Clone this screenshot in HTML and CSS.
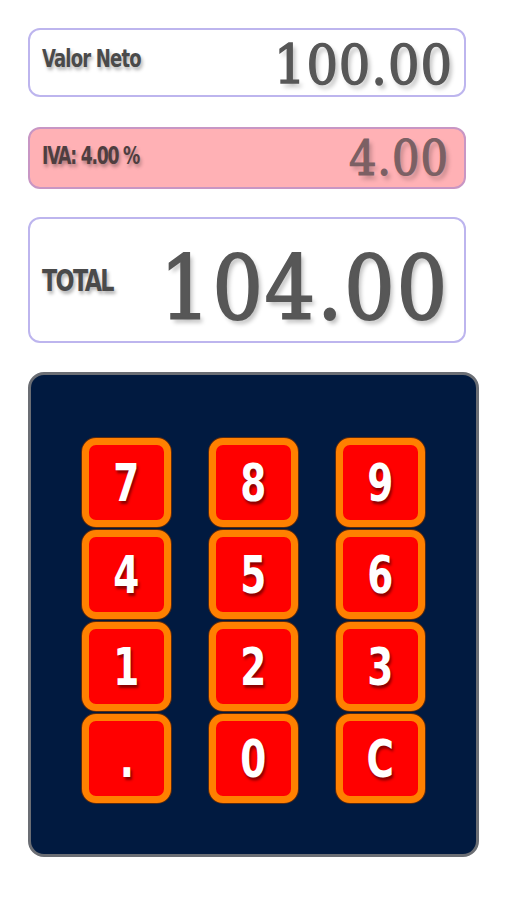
FILE: index.html
```html
<!DOCTYPE html>
<html lang="es">
<head>
    <meta charset="UTF-8">
    <meta name="viewport" content="width=device-width, initial-scale=1.0">
    <title>Calculadora IVA</title>
    <link rel="stylesheet" href="styles.css">
</head>
<body>
    <div class="app">
        <div class="field neto">
            <span class="label">Valor Neto</span>
            <span class="value">100.00</span>
        </div>
        <div class="field iva">
            <span class="label">IVA: 4.00 %</span>
            <span class="value">4.00</span>
        </div>
        <div class="field total">
            <span class="label">TOTAL</span>
            <span class="value">104.00</span>
        </div>

        <div class="keypad">
            <div class="keys">
                <button class="key"><span>7</span></button>
                <button class="key"><span>8</span></button>
                <button class="key"><span>9</span></button>
                <button class="key"><span>4</span></button>
                <button class="key"><span>5</span></button>
                <button class="key"><span>6</span></button>
                <button class="key"><span>1</span></button>
                <button class="key"><span>2</span></button>
                <button class="key"><span>3</span></button>
                <button class="key"><span>.</span></button>
                <button class="key"><span>0</span></button>
                <button class="key"><span>C</span></button>
            </div>
        </div>
    </div>
</body>
</html>
```

FILE: styles.css
```css
/* General Styling */
* {
    box-sizing: border-box;
    margin: 0;
    padding: 0;
}

body {
    background: #ffffff;
    font-family: 'DejaVu Sans Condensed', sans-serif;
}

.app {
    width: 451px;
    margin: 28px 0 0 28px;
    display: flex;
    flex-direction: column;
}

/* Display fields */
.field {
    width: 438px;
    display: flex;
    justify-content: space-between;
    align-items: center;
    border: 2px solid #bdb5ee;
    border-radius: 12px;
    background: #ffffff;
    padding: 0 15px 0 12px;
}

.label {
    display: inline-block;
    font-weight: bold;
    color: #4a4a4a;
    font-size: 25px;
    letter-spacing: -1px;
    transform: scaleX(0.8);
    transform-origin: left center;
    text-shadow: 2px 3px 4px rgba(0, 0, 0, 0.3);
}

.value {
    font-family: 'DejaVu Serif Condensed', 'DejaVu Serif', serif;
    font-stretch: condensed;
    color: #575757;
    -webkit-text-stroke: 1.4px #575757;
    letter-spacing: 1px;
    text-shadow: 3px 4px 4px rgba(0, 0, 0, 0.25);
}

.neto {
    height: 69px;
    padding-right: 11px;
}

.neto .label {
    margin-top: -8px;
}

.neto .value {
    font-size: 55px;
    margin-top: 5px;
}

.iva {
    height: 62px;
    margin-top: 30px;
    background: #ffb1b5;
    border-color: #c896c4;
}

.iva .label {
    font-size: 24px;
    letter-spacing: -1.6px;
    margin-top: -4px;
    color: #4e3e40;
}

.iva .value {
    font-size: 48px;
    color: #7b6064;
    -webkit-text-stroke: 1.2px #7b6064;
}

.total {
    height: 126px;
    margin-top: 28px;
}

.total .label {
    font-size: 31px;
    letter-spacing: -2px;
}

.total .value {
    font-size: 88px;
    letter-spacing: 2px;
    -webkit-text-stroke: 2px #575757;
    margin-top: 16px;
}

/* Keypad */
.keypad {
    margin-top: 29px;
    height: 485px;
    background: #011a40;
    border: 3px solid #6b6e74;
    border-radius: 16px;
    padding-top: 63px;
}

.keys {
    display: grid;
    grid-template-columns: repeat(3, 89px);
    grid-auto-rows: 89px;
    column-gap: 38px;
    row-gap: 3px;
    justify-content: center;
}

.key {
    background: #ff0000;
    border: 7px solid #ff8000;
    border-radius: 14px;
    box-shadow: 0 0 0 1px #5a2a10;
    color: #ffffff;
    font-family: 'DejaVu Sans Condensed', sans-serif;
    font-weight: bold;
    font-size: 52px;
    text-shadow: 2px 3px 3px #8a0000;
    cursor: pointer;
}

.key span {
    display: inline-block;
    transform: scaleX(0.8);
}
```
